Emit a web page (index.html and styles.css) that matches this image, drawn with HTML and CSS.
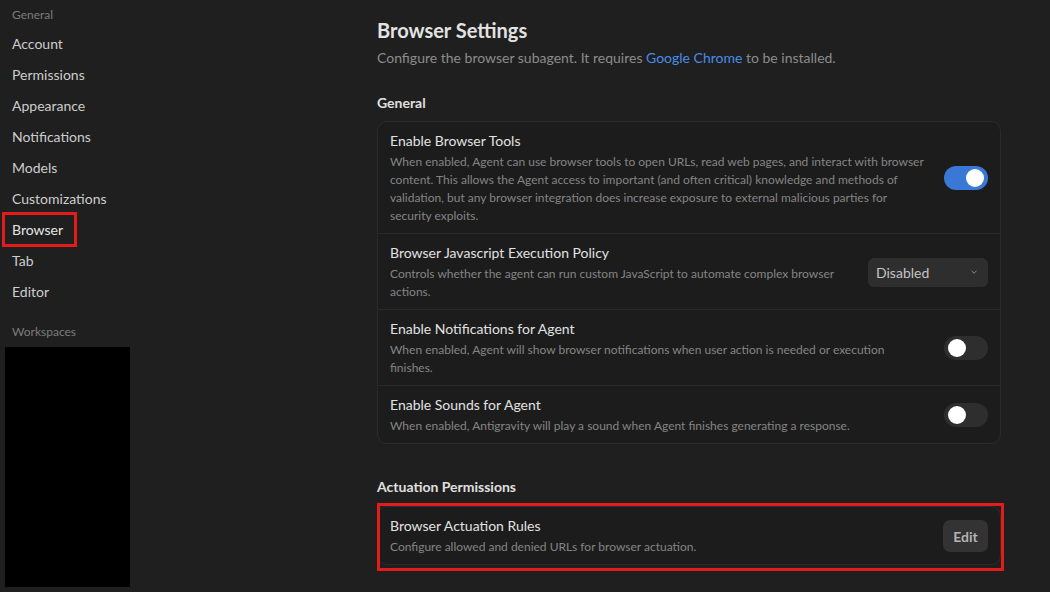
FILE: index.html
```html
<!DOCTYPE html>
<html lang="en">
<head>
<meta charset="utf-8">
<title>Browser Settings</title>
<link rel="stylesheet" href="styles.css">
</head>
<body>
<div class="app">
  <aside class="sidebar">
    <div class="side-label">General</div>
    <nav class="side-nav">
      <div class="side-item">Account</div>
      <div class="side-item">Permissions</div>
      <div class="side-item">Appearance</div>
      <div class="side-item">Notifications</div>
      <div class="side-item">Models</div>
      <div class="side-item">Customizations</div>
      <div class="side-item active"><span class="mark">Browser</span></div>
      <div class="side-item">Tab</div>
      <div class="side-item">Editor</div>
    </nav>
    <div class="side-label ws">Workspaces</div>
    <div class="redacted"></div>
  </aside>

  <main class="main">
    <h1 class="title">Browser Settings</h1>
    <p class="subtitle">Configure the browser subagent. It requires <a class="link">Google Chrome</a> to be installed.</p>

    <h2 class="section">General</h2>
    <div class="card">
      <div class="row">
        <div class="text">
          <div class="row-title">Enable Browser Tools</div>
          <div class="row-desc">When enabled, Agent can use browser tools to open URLs, read web pages, and interact with browser content. This allows the Agent access to important (and often critical) knowledge and methods of validation, but any browser integration does increase exposure to external malicious parties for security exploits.</div>
        </div>
        <div class="toggle on"><span class="knob"></span></div>
      </div>
      <div class="row">
        <div class="text">
          <div class="row-title">Browser Javascript Execution Policy</div>
          <div class="row-desc">Controls whether the agent can run custom JavaScript to automate complex browser actions.</div>
        </div>
        <div class="select">
          <span>Disabled</span>
          <svg class="chev" width="8" height="6" viewBox="0 0 8 6"><path d="M1.5 1.8 L4 4.2 L6.5 1.8" fill="none" stroke="#8a8a8a" stroke-width="1"/></svg>
        </div>
      </div>
      <div class="row">
        <div class="text">
          <div class="row-title">Enable Notifications for Agent</div>
          <div class="row-desc">When enabled, Agent will show browser notifications when user action is needed or execution finishes.</div>
        </div>
        <div class="toggle"><span class="knob"></span></div>
      </div>
      <div class="row">
        <div class="text">
          <div class="row-title">Enable Sounds for Agent</div>
          <div class="row-desc">When enabled, Antigravity will play a sound when Agent finishes generating a response.</div>
        </div>
        <div class="toggle"><span class="knob"></span></div>
      </div>
    </div>

    <h2 class="section second">Actuation Permissions</h2>
    <div class="highlight">
      <div class="card">
        <div class="row">
          <div class="text">
            <div class="row-title">Browser Actuation Rules</div>
            <div class="row-desc">Configure allowed and denied URLs for browser actuation.</div>
          </div>
          <div class="btn">Edit</div>
        </div>
      </div>
      <div class="redbox"></div>
    </div>
  </main>
</div>
</body>
</html>
```
FILE: styles.css
```css
html, body {
  margin: 0;
  padding: 0;
  height: 100%;
  background: #1f1f1f;
  overflow: hidden;
}
body {
  font-family: Lato, "Noto Sans", sans-serif;
  color: #cccccc;
}
.app {
  display: flex;
  height: 100%;
}
.sidebar {
  width: 140px;
  flex: none;
  display: flex;
  flex-direction: column;
}
.side-label {
  font-size: 12px;
  color: #7c7c7c;
  line-height: 16px;
  padding: 7px 0 0 12px;
  height: 21px;
}
.side-label.ws {
  padding-top: 17px;
  height: 23px;
}
.side-nav {
  display: flex;
  flex-direction: column;
}
.side-item {
  font-size: 14px;
  line-height: 31px;
  height: 31px;
  padding-left: 12px;
  color: #cdcdcd;
}
.side-item.active {
  padding-left: 2px;
  display: flex;
  align-items: center;
}
.mark {
  display: inline-block;
  border: 3px solid #e31b1b;
  padding: 0 11px 0 7px;
  line-height: 29px;
  color: #e6e6e6;
}
.redacted {
  margin: 0 0 0 5px;
  width: 125px;
  height: 240px;
  background: #000;
}
.main {
  margin-left: 237px;
  width: 627px;
  display: flex;
  flex-direction: column;
}
.title {
  margin: 16px 0 0;
  font-size: 20px;
  font-weight: 700;
  line-height: 28px;
  color: #e3e3e3;
}
.subtitle {
  margin: 4px 0 0;
  font-size: 14px;
  line-height: 20px;
  color: #8c8c8c;
}
.link {
  color: #4a8be8;
}
.section {
  margin: 25px 0 0;
  font-size: 14px;
  font-weight: 700;
  line-height: 20px;
  color: #e0e0e0;
}
.section.second {
  margin-top: 33px;
}
.card {
  width: 624px;
  box-sizing: border-box;
  margin-top: 8px;
  border: 1px solid #2b2b2b;
  border-radius: 10px;
  background: #1c1c1c;
}
.row {
  display: flex;
  align-items: center;
  gap: 16px;
  padding: 9px 12px 8px;
}
.row + .row {
  border-top: 1px solid #2a2a2a;
}
.text {
  flex: 1;
  min-width: 0;
}
.row-title {
  font-size: 14px;
  line-height: 20px;
  color: #e2e2e2;
  margin-bottom: 2px;
}
.row-desc {
  font-size: 12px;
  line-height: 18px;
  color: #858585;
}
.toggle {
  flex: none;
  width: 44px;
  height: 24px;
  border-radius: 12px;
  background: #2e2e2e;
  display: flex;
  align-items: center;
  padding: 0 4px;
  box-sizing: border-box;
}
.toggle.on {
  background: #3a78d6;
  justify-content: flex-end;
}
.knob {
  width: 18px;
  height: 18px;
  border-radius: 50%;
  background: #ffffff;
}
.select {
  flex: none;
  width: 120px;
  height: 29px;
  box-sizing: border-box;
  border-radius: 6px;
  background: #2e2e2e;
  display: flex;
  align-items: center;
  justify-content: space-between;
  padding: 0 10px 0 8px;
  font-size: 14px;
  color: #c4c4c4;
}
.highlight {
  position: relative;
  margin-top: 9px;
}
.highlight .card {
  margin-top: 0;
}
.redbox {
  position: absolute;
  top: -3px;
  left: 0;
  right: 0;
  bottom: -6px;
  border: 3px solid #e31b1b;
  pointer-events: none;
}
.btn {
  flex: none;
  width: 45px;
  height: 32px;
  border-radius: 7px;
  background: #333333;
  color: #b4b4b4;
  font-size: 14px;
  font-weight: 700;
  display: flex;
  align-items: center;
  justify-content: center;
}
```
